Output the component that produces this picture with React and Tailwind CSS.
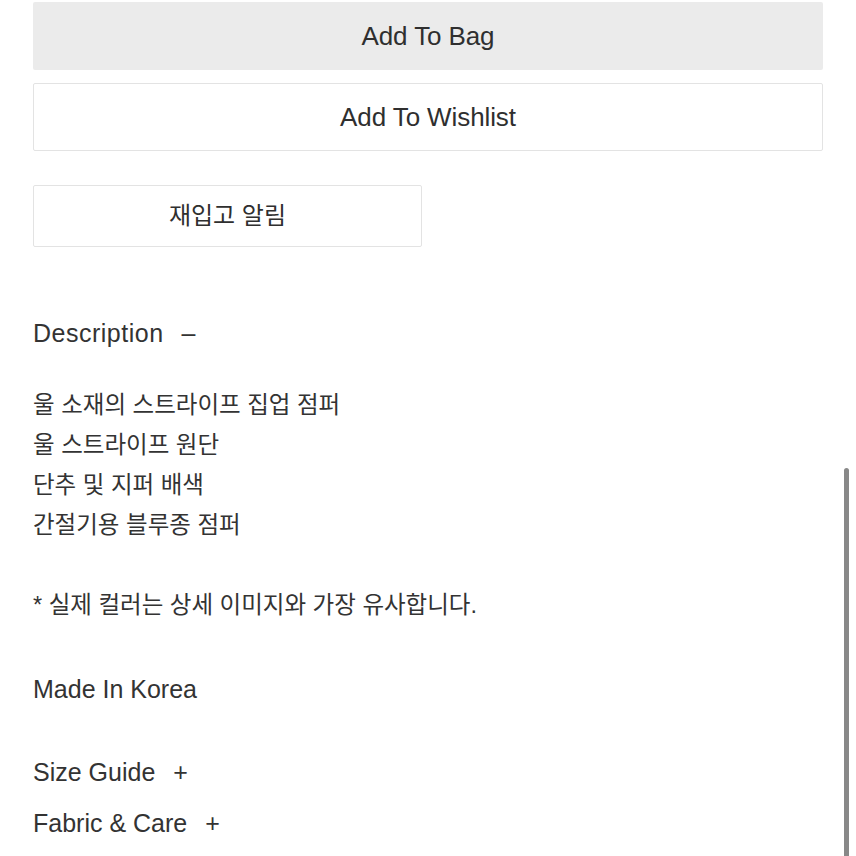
export default function App() {
  const font = { fontFamily: '"Liberation Sans", "Noto Sans CJK KR", sans-serif' };
  return (
    <div className="relative w-[856px] h-[856px] overflow-hidden bg-white text-[#333333]" style={font}>
      <div className="flex flex-col px-[33px] pt-[2px]">
        <button className="h-[68px] w-full bg-[#ebebeb] rounded-[2px] text-[26px] tracking-[-0.1px] text-[#2f2f2f]">Add To Bag</button>
        <button className="mt-[13px] h-[68px] w-full bg-white border border-[#e3e3e3] rounded-[2px] text-[26px] tracking-[-0.1px] text-[#2f2f2f]">Add To Wishlist</button>
        <button className="mt-[34px] h-[62px] w-[389px] bg-white border border-[#e3e3e3] rounded-[2px] text-[24px] text-[#2f2f2f]">재입고 알림</button>

        <div className="mt-[66px] flex items-center gap-[18px] text-[25px] leading-[40px]">
          <span className="tracking-[0.5px]">Description</span>
          <span>–</span>
        </div>

        <div className="mt-[32px] text-[23.5px] leading-[40px]">
          <div>울 소재의 스트라이프 집업 점퍼</div>
          <div>울 스트라이프 원단</div>
          <div>단추 및 지퍼 배색</div>
          <div>간절기용 블루종 점퍼</div>
          <div className="h-[40px]"></div>
          <div>* 실제 컬러는 상세 이미지와 가장 유사합니다.</div>
        </div>

        <div className="mt-[44px] text-[25px] leading-[40px]">Made In Korea</div>

        <div className="mt-[43px] flex items-center gap-[18px] text-[25px] leading-[40px]">
          <span>Size Guide</span>
          <span>+</span>
        </div>
        <div className="mt-[11px] flex items-center gap-[18px] text-[25px] leading-[40px]">
          <span>Fabric &amp; Care</span>
          <span>+</span>
        </div>
      </div>
      <div className="absolute right-[7px] top-[468px] h-[400px] w-[5px] rounded-full bg-[#888888]"></div>
    </div>
  );
}
